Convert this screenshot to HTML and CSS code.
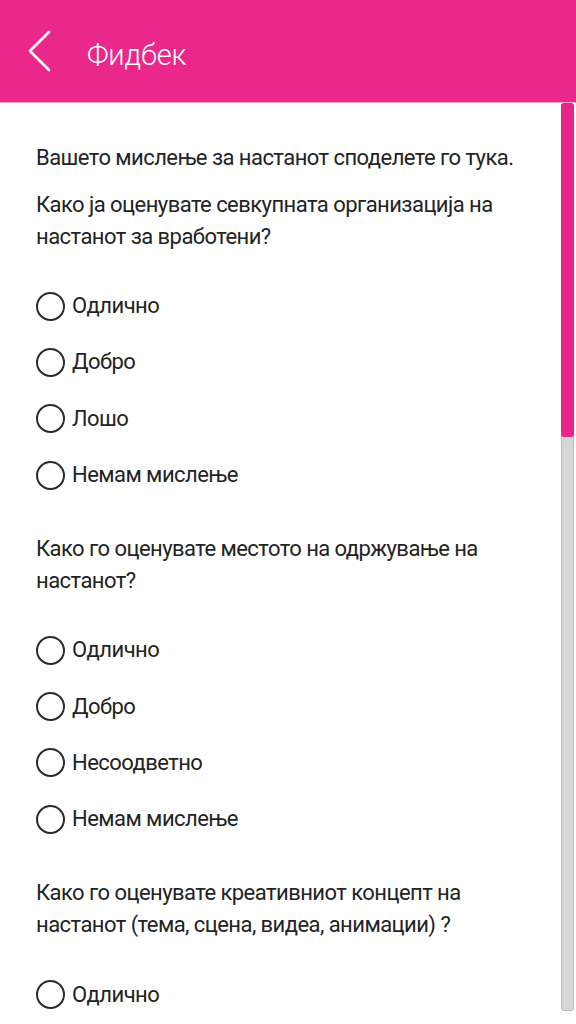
FILE: index.html
```html
<!DOCTYPE html>
<html lang="mk">
<head>
<meta charset="utf-8">
<title>Фидбек</title>
<link rel="stylesheet" href="styles.css">
</head>
<body>
<div class="app">
  <header class="topbar">
    <button class="back" aria-label="Назад">
      <svg width="24" height="42" viewBox="0 0 24 42"><path d="M21 2 L2 21 L21 40" fill="none" stroke="#fff" stroke-width="2.6" stroke-linecap="round" stroke-linejoin="round"/></svg>
    </button>
    <h1 class="title">Фидбек</h1>
  </header>
  <div class="main">
    <div class="content">
      <p class="intro">Вашето мислење за настанот споделете го тука.</p>

      <p class="question">Како ја оценувате севкупната организација на настанот за вработени?</p>
      <ul class="options">
        <li class="option"><span class="radio"></span><span class="label">Одлично</span></li>
        <li class="option"><span class="radio"></span><span class="label">Добро</span></li>
        <li class="option"><span class="radio"></span><span class="label">Лошо</span></li>
        <li class="option"><span class="radio"></span><span class="label">Немам мислење</span></li>
      </ul>

      <p class="question">Како го оценувате местото на одржување на настанот?</p>
      <ul class="options">
        <li class="option"><span class="radio"></span><span class="label">Одлично</span></li>
        <li class="option"><span class="radio"></span><span class="label">Добро</span></li>
        <li class="option"><span class="radio"></span><span class="label">Несоодветно</span></li>
        <li class="option"><span class="radio"></span><span class="label">Немам мислење</span></li>
      </ul>

      <p class="question">Како го оценувате креативниот концепт на настанот (тема, сцена, видеа, анимации) ?</p>
      <ul class="options">
        <li class="option"><span class="radio"></span><span class="label">Одлично</span></li>
      </ul>
    </div>
    <div class="scrollbar">
      <div class="thumb"></div>
    </div>
  </div>
</div>
</body>
</html>
```
FILE: styles.css
```css
* { box-sizing: border-box; }
html, body { margin: 0; padding: 0; }
body {
  width: 576px;
  height: 1024px;
  overflow: hidden;
  background: #fff;
  font-family: Roboto, "Noto Sans", sans-serif;
  color: #232323;
}
.app { display: flex; flex-direction: column; height: 1024px; }
.topbar {
  flex: 0 0 auto;
  height: 103px;
  background: #ea278b;
  border-bottom: 1px solid #f7a3cc;
  display: flex;
  align-items: center;
  padding-left: 28px;
}
.back {
  background: none;
  border: 0;
  padding: 0;
  width: 24px;
  height: 42px;
  display: flex;
  cursor: pointer;
}
.title {
  margin: 7px 0 0 35px;
  font-size: 29px;
  font-weight: 300;
  color: #fff;
  letter-spacing: -0.2px;
}
.main {
  flex: 1 1 auto;
  display: flex;
  min-height: 0;
}
.content {
  flex: 1 1 auto;
  padding: 39px 30px 0 36px;
  font-size: 22px;
  line-height: 32px;
  letter-spacing: -0.55px;
}
.intro { margin: 0; }
.question { margin: 15px 0 25px; }
.options + .question { margin-top: 30px; }
.options { list-style: none; margin: 0; padding: 0; }
.option {
  height: 56.3px;
  display: flex;
  align-items: center;
}
.radio {
  width: 29px;
  height: 29px;
  border: 2px solid #2a2a2a;
  border-radius: 50%;
  margin-right: 7px;
  flex: 0 0 auto;
}
.scrollbar {
  flex: 0 0 auto;
  width: 13px;
  margin: 0 2px 13px 0;
  background: #d6d6d6;
  border: 1px solid #bcbcbc;
  border-radius: 3px;
  display: flex;
  flex-direction: column;
}
.thumb {
  height: 334px;
  background: #e8258a;
  border-radius: 3px;
  margin: -1px;
}
```
